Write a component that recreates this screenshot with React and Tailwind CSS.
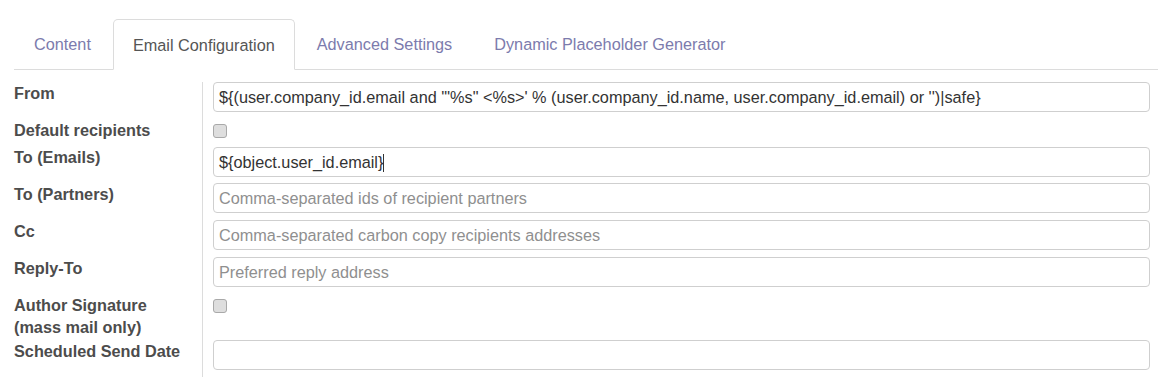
import { useState } from "react";

const tabs = ["Content", "Email Configuration", "Advanced Settings", "Dynamic Placeholder Generator"];

function Checkbox() {
  return (
    <div className="w-[14px] h-[14px] rounded-[3px] border border-[#a9a9a9] bg-[#dedede]" />
  );
}

function TextInput({ value, placeholder, cursor }) {
  return (
    <div className="h-[30px] border border-[#cfcfcf] rounded-[4px] bg-white px-[5px] flex items-center whitespace-nowrap overflow-hidden">
      {value ? (
        <span className="text-[#333]">
          {value}
          {cursor && <span className="inline-block w-px h-[18px] bg-[#333] align-middle -mt-[2px]" />}
        </span>
      ) : (
        <span className="text-[#8f8f8f]">{placeholder}</span>
      )}
    </div>
  );
}

const rows = [
  {
    label: "From",
    h: "h-[37px]",
    field: <TextInput value={`\${(user.company_id.email and '"%s" <%s>' % (user.company_id.name, user.company_id.email) or '')|safe}`} />,
  },
  { label: "Default recipients", h: "h-[27px]", field: <div className="pt-[5px]"><Checkbox /></div> },
  { label: "To (Emails)", h: "h-[37px]", field: <div className="pt-px"><TextInput value="${object.user_id.email}" cursor /></div> },
  { label: "To (Partners)", h: "h-[37px]", field: <TextInput placeholder="Comma-separated ids of recipient partners" /> },
  { label: "Cc", h: "h-[37px]", field: <TextInput placeholder="Comma-separated carbon copy recipients addresses" /> },
  { label: "Reply-To", h: "h-[37px]", field: <TextInput placeholder="Preferred reply address" /> },
  {
    label: (
      <>
        Author Signature
        <br />
        (mass mail only)
      </>
    ),
    h: "h-[46px]",
    field: <div className="pt-[5px]"><Checkbox /></div>,
  },
  { label: "Scheduled Send Date", h: "h-[37px]", field: <TextInput placeholder="" /> },
];

export default function App() {
  const [active] = useState(1);

  return (
    <div className="w-[1158px] h-[377px] overflow-hidden bg-white font-['Liberation_Sans',Arial,sans-serif] text-[16.25px]">
      <div className="pt-[19px] pl-[14px]">
        <div className="flex border-b border-[#dcdcdc] h-[51px]">
          {tabs.map((t, i) => (
            <div
              key={t}
              className={
                i === active
                  ? "mr-[2px] px-[19px] h-[51px] flex items-center pt-[1px] border border-[#dcdcdc] border-b-white rounded-t-[5px] bg-white text-[#555] -mb-px"
                  : "mr-[2px] px-[20px] h-[50px] flex items-center pt-[1px] text-[#7c7bad]"
              }
            >
              {t}
            </div>
          ))}
        </div>
        <div className="mt-[12px] flex">
          <div className="w-[189px] border-r border-[#dcdcdc] shrink-0">
            {rows.map((r, i) => (
              <div key={i} className={`${r.h} font-bold text-[#4c4c4c] leading-[22px]`}>
                {r.label}
              </div>
            ))}
          </div>
          <div className="flex-1 pl-[10px] pr-[8px]">
            {rows.map((r, i) => (
              <div key={i} className={r.h}>
                {r.field}
              </div>
            ))}
          </div>
        </div>
      </div>
    </div>
  );
}
